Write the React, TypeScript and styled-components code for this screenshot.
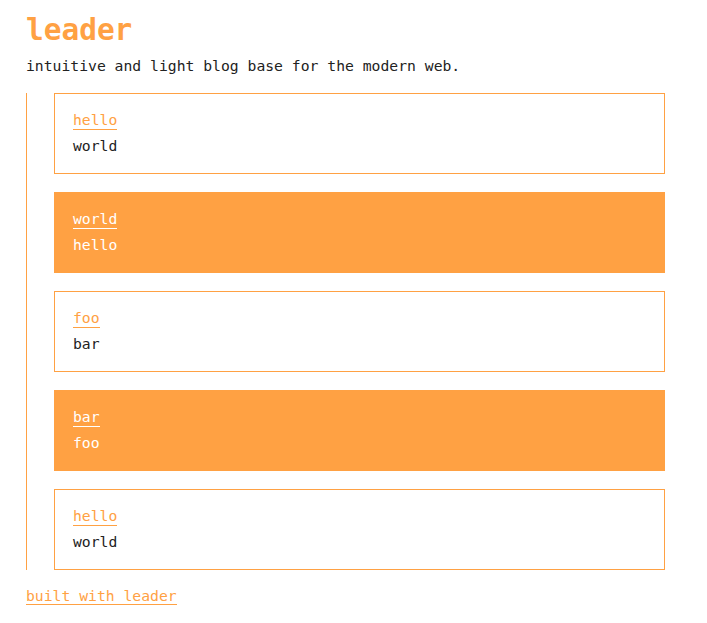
import React from "react";
import styled, { createGlobalStyle } from "styled-components";

const ORANGE = "#ffa143";

const Global = createGlobalStyle`
  html, body { margin: 0; padding: 0; background: #fff; }
  body {
    font-family: "DejaVu Sans Mono", "Liberation Mono", monospace;
    font-size: 14.72px;
    color: #222;
  }
`;

const Page = styled.div`
  max-width: 639px;
  padding: 10px 0 0 26px;
`;

const Title = styled.h1`
  margin: 0;
  font-size: 29.44px;
  line-height: 40px;
  font-weight: bold;
  color: ${ORANGE};
`;

const Tagline = styled.p`
  margin: 6px 0 17px;
  line-height: 20px;
`;

const List = styled.div`
  border-left: 1px solid ${ORANGE};
  padding-left: 27px;
  display: flex;
  flex-direction: column;
  gap: 18px;
`;

const Card = styled.div<{ $filled: boolean }>`
  border: 1px solid ${ORANGE};
  background: ${(p) => (p.$filled ? ORANGE : "#fff")};
  color: ${(p) => (p.$filled ? "#fff" : "#222")};
  padding: 17px 18px 0;
  height: 81px;
  box-sizing: border-box;
  display: flex;
  flex-direction: column;
  align-items: flex-start;
`;

const CardLink = styled.a<{ $filled: boolean }>`
  color: ${(p) => (p.$filled ? "#fff" : ORANGE)};
  text-decoration: none;
  line-height: 18px;
  border-bottom: 1px solid ${(p) => (p.$filled ? "#fff" : ORANGE)};
`;

const CardText = styled.div`
  line-height: 32px;
`;

const Footer = styled.footer`
  margin-top: 16px;
`;

const FooterLink = styled.a`
  color: ${ORANGE};
  text-decoration: none;
  line-height: 19px;
  border-bottom: 1px solid ${ORANGE};
`;

const posts = [
  { title: "hello", body: "world" },
  { title: "world", body: "hello" },
  { title: "foo", body: "bar" },
  { title: "bar", body: "foo" },
  { title: "hello", body: "world" },
];

export default function App() {
  return (
    <>
      <Global />
      <Page>
        <Title>leader</Title>
        <Tagline>intuitive and light blog base for the modern web.</Tagline>
        <List>
          {posts.map((p, i) => (
            <Card key={i} $filled={i % 2 === 1}>
              <CardLink href="#" $filled={i % 2 === 1}>
                {p.title}
              </CardLink>
              <CardText>{p.body}</CardText>
            </Card>
          ))}
        </List>
        <Footer>
          <FooterLink href="#">built with leader</FooterLink>
        </Footer>
      </Page>
    </>
  );
}
